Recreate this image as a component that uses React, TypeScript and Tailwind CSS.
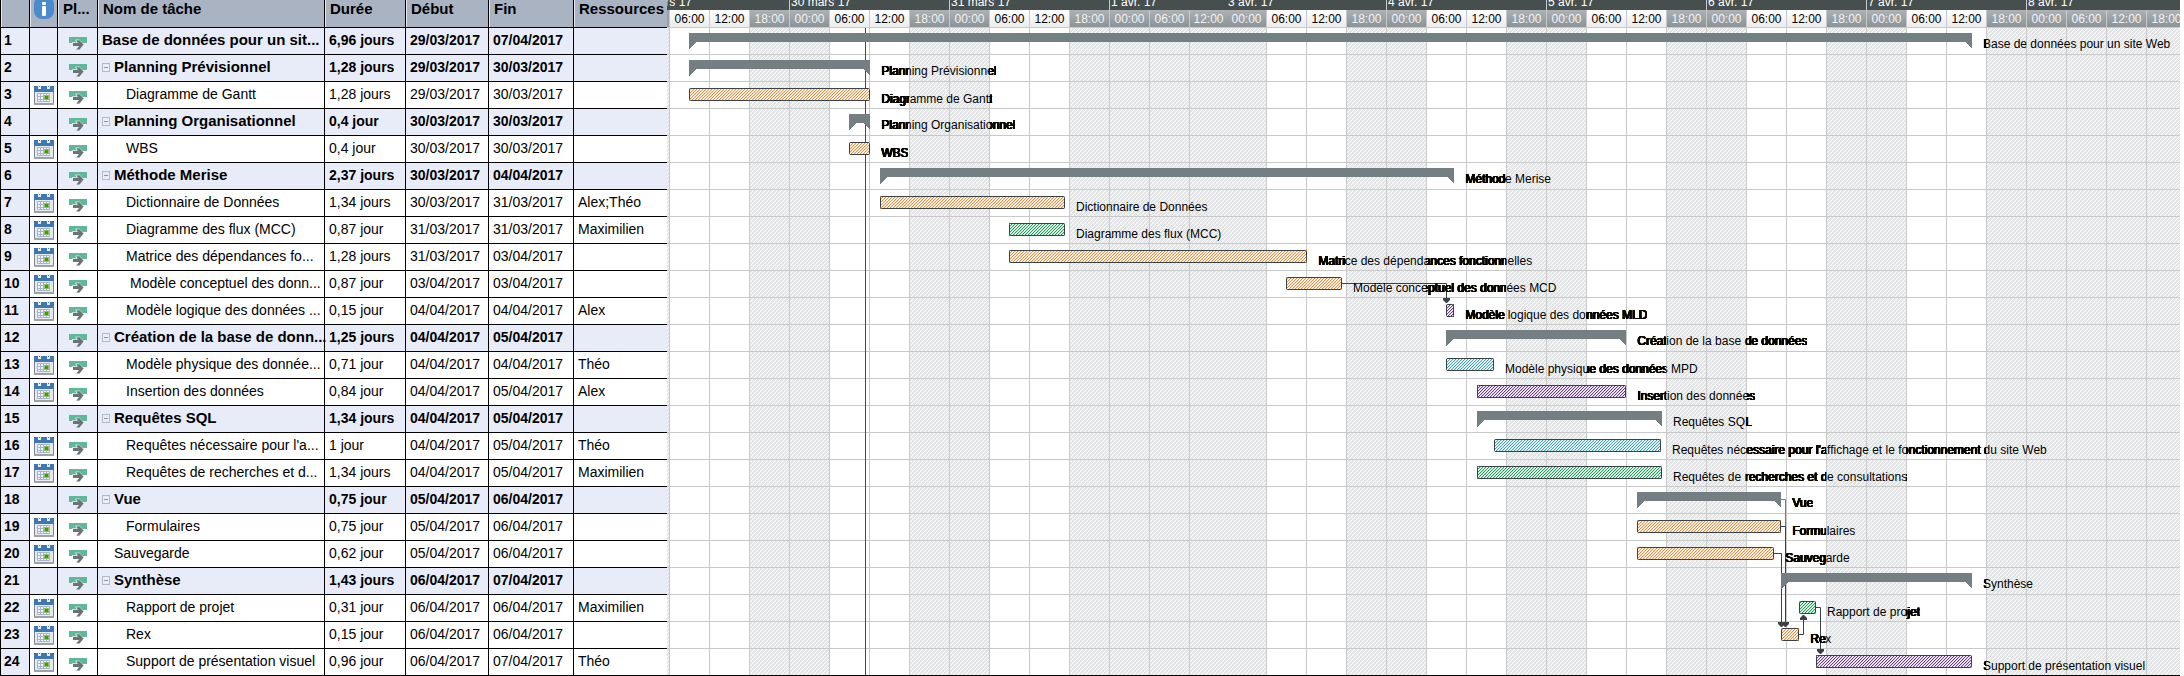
import type { CSSProperties } from "react";

type Kind = "summary" | "orange" | "green" | "teal" | "purple";

interface Task {
  name: string;
  label: string;
  level: 0 | 1 | 2;
  lead?: boolean;
  duration: string;
  start: string;
  end: string;
  resources?: string;
  kind: Kind;
  from: number;
  to: number;
}

const TASKS: Task[] = [
  { name: "Base de données pour un sit...", label: "Base de données pour un site Web", level: 0, duration: "6,96 jours", start: "29/03/2017", end: "07/04/2017", kind: "summary", from: 689, to: 1972 },
  { name: "Planning Prévisionnel", label: "Planning Prévisionnel", level: 1, duration: "1,28 jours", start: "29/03/2017", end: "30/03/2017", kind: "summary", from: 689, to: 870 },
  { name: "Diagramme de Gantt", label: "Diagramme de Gantt", level: 2, duration: "1,28 jours", start: "29/03/2017", end: "30/03/2017", kind: "orange", from: 689, to: 870 },
  { name: "Planning Organisationnel", label: "Planning Organisationnel", level: 1, duration: "0,4 jour", start: "30/03/2017", end: "30/03/2017", kind: "summary", from: 849, to: 870 },
  { name: "WBS", label: "WBS", level: 2, duration: "0,4 jour", start: "30/03/2017", end: "30/03/2017", kind: "orange", from: 849, to: 870 },
  { name: "Méthode Merise", label: "Méthode Merise", level: 1, duration: "2,37 jours", start: "30/03/2017", end: "04/04/2017", kind: "summary", from: 880, to: 1454 },
  { name: "Dictionnaire de Données", label: "Dictionnaire de Données", level: 2, duration: "1,34 jours", start: "30/03/2017", end: "31/03/2017", resources: "Alex;Théo", kind: "orange", from: 880, to: 1065 },
  { name: "Diagramme des flux (MCC)", label: "Diagramme des flux (MCC)", level: 2, duration: "0,87 jour", start: "31/03/2017", end: "31/03/2017", resources: "Maximilien", kind: "green", from: 1009, to: 1065 },
  { name: "Matrice des dépendances fo...", label: "Matrice des dépendances fonctionnelles", level: 2, duration: "1,28 jours", start: "31/03/2017", end: "03/04/2017", kind: "orange", from: 1009, to: 1307 },
  { name: "Modèle conceptuel des donn...", label: "Modèle conceptuel des données MCD", level: 2, lead: true, duration: "0,87 jour", start: "03/04/2017", end: "03/04/2017", kind: "orange", from: 1286, to: 1342 },
  { name: "Modèle logique des données ...", label: "Modèle logique des données MLD", level: 2, duration: "0,15 jour", start: "04/04/2017", end: "04/04/2017", resources: "Alex", kind: "purple", from: 1446, to: 1454 },
  { name: "Création de la base de donn...", label: "Création de la base de données", level: 1, duration: "1,25 jours", start: "04/04/2017", end: "05/04/2017", kind: "summary", from: 1446, to: 1626 },
  { name: "Modèle physique des donnée...", label: "Modèle physique des données MPD", level: 2, duration: "0,71 jour", start: "04/04/2017", end: "04/04/2017", resources: "Théo", kind: "teal", from: 1446, to: 1494 },
  { name: "Insertion des données", label: "Insertion des données", level: 2, duration: "0,84 jour", start: "04/04/2017", end: "05/04/2017", resources: "Alex", kind: "purple", from: 1477, to: 1626 },
  { name: "Requêtes SQL", label: "Requêtes SQL", level: 1, duration: "1,34 jours", start: "04/04/2017", end: "05/04/2017", kind: "summary", from: 1477, to: 1662 },
  { name: "Requêtes nécessaire pour l'a...", label: "Requêtes nécessaire pour l'affichage et le fonctionnement du site Web", level: 2, duration: "1 jour", start: "04/04/2017", end: "05/04/2017", resources: "Théo", kind: "teal", from: 1494, to: 1661 },
  { name: "Requêtes de recherches et d...", label: "Requêtes de recherches et de consultations", level: 2, duration: "1,34 jours", start: "04/04/2017", end: "05/04/2017", resources: "Maximilien", kind: "green", from: 1477, to: 1662 },
  { name: "Vue", label: "Vue", level: 1, duration: "0,75 jour", start: "05/04/2017", end: "06/04/2017", kind: "summary", from: 1637, to: 1781 },
  { name: "Formulaires", label: "Formulaires", level: 2, duration: "0,75 jour", start: "05/04/2017", end: "06/04/2017", kind: "orange", from: 1637, to: 1781 },
  { name: "Sauvegarde", label: "Sauvegarde", level: 1, duration: "0,62 jour", start: "05/04/2017", end: "06/04/2017", kind: "orange", from: 1637, to: 1774 },
  { name: "Synthèse", label: "Synthèse", level: 1, duration: "1,43 jours", start: "06/04/2017", end: "07/04/2017", kind: "summary", from: 1781, to: 1972 },
  { name: "Rapport de projet", label: "Rapport de projet", level: 2, duration: "0,31 jour", start: "06/04/2017", end: "06/04/2017", resources: "Maximilien", kind: "green", from: 1799, to: 1816 },
  { name: "Rex", label: "Rex", level: 2, duration: "0,15 jour", start: "06/04/2017", end: "06/04/2017", kind: "orange", from: 1781, to: 1799 },
  { name: "Support de présentation visuel", label: "Support de présentation visuel", level: 2, duration: "0,96 jour", start: "06/04/2017", end: "07/04/2017", resources: "Théo", kind: "purple", from: 1816, to: 1972 },
];

const ORIGIN = 667;
const ROW = 27;

const INK: Record<Exclude<Kind, "summary">, string> = {
  orange: "#ef8c38",
  green: "#12a650",
  teal: "#38a5b9",
  purple: "#7236a0",
};

/* Working bands (06:00 to 18:00) of each weekday, on the time axis */
const WORK: [number, number][] = [
  [669, 749],
  [829, 909],
  [989, 1069],
  [1266, 1346],
  [1426, 1506],
  [1586, 1666],
  [1746, 1826],
  [1906, 1986],
];

const GRID_X: number[] = [
  ...Array.from({ length: 14 }, (_, i) => 669 + i * 40),
  ...Array.from({ length: 23 }, (_, i) => 1266 + i * 40),
];

const DAYS = [
  { text: "29 mars 17", cls: "w-[122px] overflow-hidden [&>span]:-ml-9" },
  { text: "30 mars 17", cls: "w-40 border-l" },
  { text: "31 mars 17", cls: "w-40 border-l" },
  { text: "1 avr. 17", cls: "w-[118px] border-l" },
  { text: "3 avr. 17", cls: "w-[159px]" },
  { text: "4 avr. 17", cls: "w-40 border-l" },
  { text: "5 avr. 17", cls: "w-40 border-l" },
  { text: "6 avr. 17", cls: "w-40 border-l" },
  { text: "7 avr. 17", cls: "w-40 border-l" },
  { text: "8 avr. 17", cls: "w-40 border-l" },
];

const CLOCK = ["06:00", "12:00", "18:00", "00:00"];
const HOURS: { text: string; work: boolean; cls: string }[] = [
  ...Array.from({ length: 14 }, (_, i) => ({
    text: CLOCK[i % 4],
    work: i % 4 < 2 && i < 12,
    cls: i === 13 ? "w-[38px] border-l" : "w-10 border-l",
  })),
  { text: "00:00", work: false, cls: "w-[39px]" },
  ...Array.from({ length: 23 }, (_, i) => ({
    text: CLOCK[i % 4],
    work: i % 4 < 2 && i < 20,
    cls: "w-10 border-l",
  })),
];

function overprintMask(x: number): CSSProperties {
  const stops: string[] = ["transparent 0px"];
  for (const [a, b] of WORK) {
    if (b <= x) continue;
    const s = Math.max(0, a - x);
    stops.push(`transparent ${s}px`, `#000 ${s}px`, `#000 ${b - x}px`, `transparent ${b - x}px`);
  }
  return { "--bands": `linear-gradient(to right, ${stops.join(", ")})` } as CSSProperties;
}

function InfoIcon() {
  return (
    <svg width="20" height="19" viewBox="0 0 20 19" className="mx-auto block" aria-hidden="true">
      <rect x="0" y="-4" width="20" height="23" rx="8" fill="#4a8ccb" />
      <rect x="8" y="2" width="4" height="3" rx="1" fill="#fff" />
      <rect x="8" y="6" width="4" height="10" rx="1" fill="#fff" />
    </svg>
  );
}

function CalendarIcon() {
  return (
    <svg width="20" height="20" viewBox="0 0 20 20" className="mx-auto block" aria-hidden="true">
      <rect x="0.5" y="2.5" width="19" height="16" fill="#e6eaf0" stroke="#7c858f" />
      <rect x="0" y="18" width="20" height="2" fill="#9ea3a8" />
      <rect x="0" y="1" width="20" height="6" fill="#3f78b0" />
      <path d="M4 0h1v2h1V0h1v4H4zM13 0h1v2h1V0h1v4h-3z" fill="#e8eef4" />
      <path d="M3.500 8.500h12v8h-12zM3.500 11.500h12M3.500 14.500h12M6.500 8.500v8M9.500 8.500v8M12.500 8.500v8" fill="#f3f5fb" stroke="#a9b3cf" />
      <rect x="10" y="10" width="5" height="5" fill="#8cc063" />
      <rect x="11" y="11" width="3" height="3" fill="#3f9c0c" />
    </svg>
  );
}

function ModeIcon() {
  return (
    <svg width="18" height="13" viewBox="0 0 18 13" className="mx-auto block" aria-hidden="true">
      <rect x="0" y="0" width="18" height="6" fill="#5fb897" />
      <path d="M3 5.500h5L6.500 3h3.800l4.300 4.200-4.300 5H6.800" fill="none" stroke="#cfdfdd" />
      <path d="M4 6h6L7.500 3.400h3l4 4-4 5h-3L10 9H4z" fill="#6c7378" />
    </svg>
  );
}

const CELL = "border-b border-r border-black px-0 pt-0 pb-0.5";

function TaskTable() {
  return (
    <table className="w-[667px] shrink-0 table-fixed border-separate border-spacing-0 whitespace-nowrap text-left text-sm leading-5">
      <colgroup>
        <col className="w-[30px]" />
        <col className="w-7" />
        <col className="w-10" />
        <col className="w-[227px]" />
        <col className="w-[81px]" />
        <col className="w-[83px]" />
        <col className="w-[85px]" />
        <col className="w-[93px]" />
      </colgroup>
      <thead>
        <tr className="h-7 bg-[#a9b3c2] align-top text-[15px] leading-[18px] [&>th]:shadow-[inset_1px_0_0_#e6eaf0]">
          <th className={`${CELL} border-l`} aria-label="Numéro" />
          <th className={CELL} aria-label="Informations"><InfoIcon /></th>
          <th className={`${CELL} pl-[5px]`}>Pl...</th>
          <th className={`${CELL} pl-[5px]`}>Nom de tâche</th>
          <th className={`${CELL} pl-[5px]`}>Durée</th>
          <th className={`${CELL} pl-[5px]`}>Début</th>
          <th className={`${CELL} pl-[5px]`}>Fin</th>
          <th className="border-b border-black p-0 pl-[5px]">Ressources</th>
        </tr>
      </thead>
      <tbody>
        {TASKS.map((t, i) => {
          const summary = t.kind === "summary";
          const indent = t.level === 2 ? (t.lead ? "pl-8" : "pl-7") : t.level === 1 && !summary ? "pl-4" : "pl-1";
          return (
            <tr key={t.label} className={summary ? "h-[27px] bg-[#e8ecf8] font-bold" : "h-[27px] bg-white"}>
              <td className={`${CELL} border-l bg-[#e8ecf8] pl-[3px] font-bold`}>{i + 1}</td>
              <td className="border-b border-r border-black p-0">{!summary && <CalendarIcon />}</td>
              <td className="border-b border-r border-black p-0 pt-1"><ModeIcon /></td>
              <td className={`${CELL} ${indent}`}>
                <div className={summary ? "flex items-center gap-1 text-[15px]" : "flex items-center"}>
                  {summary && t.level === 1 && (
                    <button
                      type="button"
                      aria-label={`Réduire ${t.label}`}
                      className="flex h-[9px] w-2 shrink-0 items-center border border-[#b3bac8] px-px"
                    >
                      <span className="h-px w-full bg-[#8d96a8]" />
                    </button>
                  )}
                  <span>{t.name}</span>
                </div>
              </td>
              <td className={`${CELL} pl-1`}>{t.duration}</td>
              <td className={`${CELL} pl-1`}>{t.start}</td>
              <td className={`${CELL} pl-1`}>{t.end}</td>
              <td className="border-b border-black px-0 pt-0 pb-0.5 pl-1">{t.resources}</td>
            </tr>
          );
        })}
      </tbody>
    </table>
  );
}

function Arrow({ x, y, up }: { x: number; y: number; up?: boolean }) {
  const d = up
    ? `M${x} ${y}h1l3 3v2h-7v-2z`
    : `M${x - 3} ${y - 5}h7v2l-3 3h-1l-3-3z`;
  return <path d={d} fill="#3a4245" />;
}

function Bar({ task, row }: { task: Task; row: number }) {
  const top = 27 + row * ROW;
  const { from, to } = task;
  if (task.kind === "summary") {
    const y = top + 6;
    return (
      <path
        d={`M${from} ${y}H${to}V${y + 16}L${to - 7} ${y + 9}H${from + 7}L${from} ${y + 16}z`}
        fill="#737f82"
        shapeRendering="crispEdges"
      />
    );
  }
  return (
    <g>
      <rect x={from} y={top + 7} width={to - from} height="13" fill="#fff" />
      <rect x={from} y={top + 7} width={to - from} height="13" fill={`url(#hatch-${task.kind})`} />
      <rect x={from + 0.5} y={top + 7.5} width={to - from - 1} height="12" rx="1" fill="none" stroke="#3a4245" />
    </g>
  );
}

function Chart() {
  return (
    <svg className="block h-[676px] w-full" aria-label="Diagramme de Gantt">
      <defs>
        <pattern id="rest" width="4" height="4" patternUnits="userSpaceOnUse">
          <rect width="4" height="4" fill="#e4e5e7" />
          <path d="M3 0h1v1h-1zM2 1h1v1h-1zM1 2h1v1h-1zM0 3h1v1h-1z" fill="#fff" />
        </pattern>
        {Object.entries(INK).map(([k, c]) => (
          <pattern key={k} id={`hatch-${k}`} width="3" height="3" patternUnits="userSpaceOnUse">
            <path d="M2 0h1v1h-1zM1 1h1v1h-1zM0 2h1v1h-1z" fill={c} />
            <path d="M0 0h1v1h-1zM2 1h1v1h-1zM1 2h1v1h-1z" fill={c} fillOpacity="0.25" />
          </pattern>
        ))}
      </defs>
      <g transform={`translate(${-ORIGIN})`}>
        <rect x={ORIGIN} y="27" width="3000" height="648" fill="url(#rest)" />
        {WORK.map(([a, b]) => (
          <rect key={a} x={a} y="27" width={b - a} height="648" fill="#fff" />
        ))}
        {GRID_X.map((x) => (
          <rect key={x} x={x} y="27" width="1" height="648" fill="#c9c9c9" />
        ))}
        {TASKS.map((t, i) => (
          <rect key={t.label} x={ORIGIN} y={27 + i * ROW} width="3000" height="1" fill="#c9c9c9" />
        ))}
        <rect x={ORIGIN} y="675" width="3000" height="1" fill="#000" />
        <rect x="865" y="28" width="1" height="647" fill="#ec0000" />
        <g fill="none" stroke="#3a4245">
          <path d="M1342 283.5H1446.5V300" />
          <path d="M1781 526.5H1786M1785.5 526V624" />
          <path d="M1774 553.5H1781.5V624" />
          <path d="M1799 634.5H1803.5V618" />
          <path d="M1816 607.5H1820.5V651" />
          <path d="M1781 499.5H1785.5V526" stroke="#737f82" />
        </g>
        {TASKS.map((t, i) => (
          <Bar key={t.label} task={t} row={i} />
        ))}
        <Arrow x={1446} y={303} />
        <Arrow x={1781} y={627} />
        <Arrow x={1785} y={627} />
        <Arrow x={1803} y={615} up />
        <Arrow x={1820} y={654} />
      </g>
    </svg>
  );
}

function BarLabel({ task, row }: { task: Task; row: number }) {
  const x = task.to + 11;
  const y = 27 + row * ROW + (task.kind === "summary" ? 9 : 10);
  return (
    <span
      data-label={task.label}
      style={{ left: x - ORIGIN, top: y, ...overprintMask(x) }}
      className="absolute whitespace-nowrap text-xs leading-4 text-black after:absolute after:left-0 after:top-0 after:content-[attr(data-label)] after:[mask-image:var(--bands)] after:[text-shadow:0_0_#000,0_0_#000,1px_0_#000,1px_0_#000]"
    >
      {task.label}
    </span>
  );
}

function Timescale() {
  return (
    <div className="absolute inset-x-0 top-0 whitespace-nowrap text-xs leading-3">
      <div className="flex h-[10px] overflow-hidden bg-[#474f4e] text-white">
        {DAYS.map((d) => (
          <div key={d.text} className={`shrink-0 border-[#c9c9c9] pl-px ${d.cls}`}>
            <span className="-mt-1 block">{d.text}</span>
          </div>
        ))}
      </div>
      <div className="flex h-[18px] overflow-hidden border-b border-[#c9c9c9] bg-[#9aa1a5] leading-[18px]">
        <div className="w-0.5 shrink-0" />
        {HOURS.map((h, i) => (
          <div
            key={i}
            className={`shrink-0 border-[#c9c9c9] bg-linear-to-b text-center ${h.work ? "from-white to-[#ececec] text-black" : "from-[#adb2b5] to-[#8a9397] text-[#f2f2f2]"} ${h.cls}`}
          >
            {h.text}
          </div>
        ))}
      </div>
    </div>
  );
}

export default function App() {
  return (
    <main className="flex items-start overflow-hidden bg-white font-['Liberation_Sans',Arial,sans-serif] text-black">
      <TaskTable />
      <section className="relative mr-1 min-w-0 flex-1 overflow-hidden">
        <Chart />
        {TASKS.map((t, i) => (
          <BarLabel key={t.label} task={t} row={i} />
        ))}
        <Timescale />
      </section>
    </main>
  );
}
